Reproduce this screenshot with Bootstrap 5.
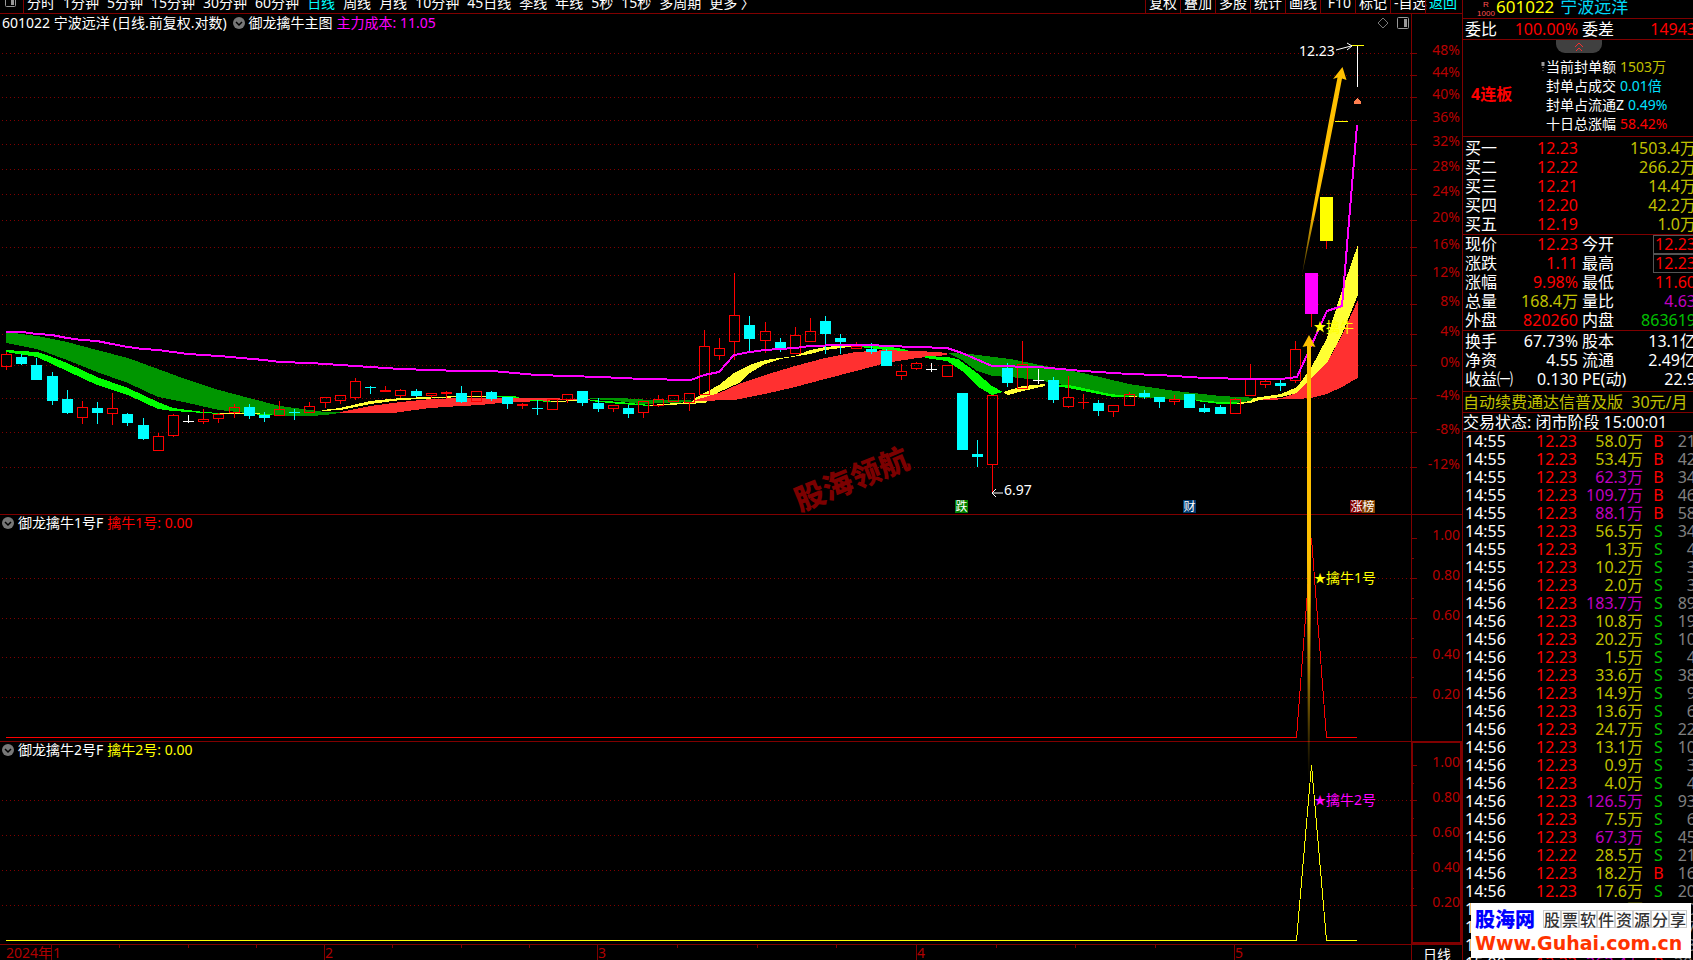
<!DOCTYPE html>
<html lang="zh-CN">
<head>
<meta charset="utf-8">
<meta name="viewport" content="width=device-width, initial-scale=1">
<title>601022 宁波远洋</title>
<link rel="stylesheet" href="https://cdn.jsdelivr.net/npm/bootstrap@5.3.0/dist/css/bootstrap.min.css">
<script src="https://cdn.jsdelivr.net/npm/bootstrap@5.3.0/dist/js/bootstrap.bundle.min.js"></script>
<style>
:root{--line:#800000;--axis:#b00000;--olive:#c0c000;--up:#f00;--down:#00c000;--pur:#c000c0}
body{background:#000;color:#fff;font:14px/20px "Noto Sans","Noto Sans CJK SC",sans-serif}
svg{display:block}
svg text{font:14px "Noto Sans","Noto Sans CJK SC",sans-serif}
svg .star{font-size:12px}
.chart-svg{shape-rendering:crispEdges}
.c-red{color:var(--up)}.c-olive{color:var(--olive)}.c-cyan{color:#00e0ff}.c-green{color:var(--down)}
.c-pur{color:var(--pur)}.c-mag{color:#f0f}.c-yellow{color:#ff0}.c-gray{color:gray}
/* period bar */
.period-bar{height:14px;border-bottom:1px solid var(--line)}
.period-bar a{color:inherit;text-decoration:none;white-space:nowrap}
.period-bar a.current{color:#0ff}
.periods{gap:8px}
.tool-links a{width:35px;padding-left:3px;border-left:1px solid var(--line)}
.tool-links a:last-child{width:37px}
.dock{width:24px;height:20px;margin-right:-5px;border-right:1px solid var(--line)}
/* chart panes */
.pane-title{top:0;left:0;right:0;height:18px;padding-left:2px}
.range-note{margin:0 6px 0 3px}
.fold{border:0;padding:0;background:none;line-height:0}
.icon-btn{border:0;padding:0;background:none;line-height:0}
.pane-tools{margin-right:53px}
.overlay-svg{top:0;left:0;pointer-events:none}
/* quote panel */
.quote{width:231px;border-left:1px solid var(--line);font-size:16px;line-height:19px}
.block{border-bottom:1px solid var(--line)}
.quote table{width:calc(100% + 3px);table-layout:fixed;border-collapse:collapse}
.quote th,.quote td{padding:0;font-weight:400;white-space:nowrap;overflow:visible;text-align:right}
.quote .first{padding-left:2px;text-align:left}
.quote .q-label{padding-left:4px;text-align:left}
.quote .trades{line-height:18px}
.stock-head{height:19px;font-size:17px;line-height:13px}
.margin-tag{width:18px;margin:0 1px 0 14px;font-size:8px;line-height:9px;color:#ff5050;font-family:"Liberation Sans",sans-serif}
.stock-name{margin-left:6px;color:#00d8f8}
.fold-tab{width:46px;height:13px;left:93px;top:0;border:0;padding:0;background:#404040;border-radius:0 0 9px 9px}
.order-ratio{padding-top:1px}
.bids{padding-top:2px}
.funds{padding:1px 0 2px}
.seal{height:97px;padding-top:13px;font-size:14px}
.streak{width:76px}
.pad-row{padding-left:7px}
.notice{line-height:20px}
.status{line-height:18px}
.boxed{outline:1px solid #555;outline-offset:-1px;padding-left:2px}
.site-mark{left:8px;right:2px;bottom:2px;height:55px;background:#fff;color:#333}
.site-mark b{font:900 20px/32px "Noto Sans CJK SC",sans-serif;color:#00f}
.site-mark .tiles i{font:normal 500 16px/18px "Noto Sans CJK SC",sans-serif;width:18px;height:18px;text-align:center;box-shadow:inset 0 0 0 1px #ccc}
.site-mark strong{font:700 19px/16px "DejaVu Sans",sans-serif;color:#f30}
</style>
</head>
<body class="overflow-hidden">
<div class="d-flex vh-100 overflow-hidden">
<main class="flex-grow-1 d-flex flex-column overflow-hidden">
  <nav class="period-bar d-flex justify-content-between align-items-end overflow-hidden flex-shrink-0" aria-label="周期">
    <div class="periods d-flex align-items-end">
      <span class="dock"><svg width="24" height="20"><rect x="5.500" y="1.500" width="10" height="12" rx="1" fill="none" stroke="#999"/><rect x="11" y="4" width="3" height="8" fill="#999"/></svg></span>
      <a href="#">分时</a><a href="#">1分钟</a><a href="#">5分钟</a><a href="#">15分钟</a><a href="#">30分钟</a><a href="#">60分钟</a><a href="#" class="current">日线</a><a href="#">周线</a><a href="#">月线</a><a href="#">10分钟</a><a href="#">45日线</a><a href="#">季线</a><a href="#">年线</a><a href="#">5秒</a><a href="#">15秒</a><a href="#">多周期</a><a href="#">更多 〉</a>
    </div>
    <div class="tool-links d-flex">
      <a href="#">复权</a><a href="#">叠加</a><a href="#">多股</a><a href="#">统计</a><a href="#">画线</a><a href="#">&nbsp;F10</a><a href="#">标记</a><a href="#">-自选</a><a href="#" class="current">返回</a>
    </div>
  </nav>

  <div class="position-relative">
    <section class="position-relative">
      <svg id="main" class="chart-svg w-100" viewBox="0 14 1462 500">
        <g id="grid1" stroke="#800000"></g>
        <g id="bands"></g>
        <text x="800" y="512" transform="rotate(-22 800 512)" style="font:900 30px 'Noto Sans CJK SC',sans-serif" fill="#7c0000">股海领航</text>
        <g id="candles"></g>
        <polyline fill="none" stroke="#f0f" stroke-width="2" points="6,332 22,332 37,334 52,335 67,338 82,340 97,341 112,344 128,347 143,349 158,350 173,352 188,354 219,356 264,360 280,362 310,363 340,365 370,367 401,369 431,370 461,371 492,371 537,375 600,377 643,379 691,380 704,375 719,372 734,355 750,352 765,350 795,348 810,346 841,345 871,345 887,346 917,347 947,348 962,353 992,366 1038,367 1083,371 1129,374 1159,375 1205,378 1250,379 1281,379 1297,377 1327,311 1342,306 1357,125"/>
        <text x="1299" y="56" fill="#fff">12.23</text>
        <path d="M1336 50L1351 46M1347 43L1352 46L1347 50" stroke="#fff" fill="none" shape-rendering="auto"/>
        <path d="M1354 104V101L1357 98L1361 101V104Z" fill="#ff7f50"/>
        <text x="1004" y="495" fill="#fff">6.97</text>
        <path d="M992 493H1003M996 489L992 493L996 497" stroke="#fff" fill="none" shape-rendering="auto"/>
        <path d="M1320 321l1.500 4h4.500l-3.500 3 1.500 4.500-4-2.800-4 2.800 1.500-4.500-3.500-3h4.500z" fill="#ff0" shape-rendering="auto"/>
        <text x="1326" y="332" fill="#ff0">擒牛</text>
        <g id="tags"></g>
      </svg>
      <div class="pane-title position-absolute d-flex align-items-center">
        <span>601022 宁波远洋</span><span class="range-note">(日线.前复权.对数)</span>
        <button class="fold me-1" aria-label="展开"><svg width="12" height="12"><circle cx="6" cy="6" r="6" fill="#777"/><path d="M3 5l3 3 3-3" stroke="#000" stroke-width="1.500" fill="none"/></svg></button>
        <span class="me-1">御龙擒牛主图</span><span class="c-mag">主力成本: 11.05</span>
        <span class="pane-tools ms-auto d-flex gap-2">
          <button class="icon-btn" aria-label="标记"><svg width="12" height="12"><path d="M6 1l5 5-5 5-5-5z" fill="none" stroke="#777"/></svg></button>
          <button class="icon-btn" aria-label="侧栏"><svg width="12" height="12"><rect x=".5" y=".5" width="11" height="11" rx="1" fill="none" stroke="#999"/><path d="M7 2h3v8h-3z" fill="#999"/></svg></button>
        </span>
      </div>
    </section>

    <section class="position-relative">
      <svg class="chart-svg w-100" viewBox="0 514 1462 227">
        <path d="M0 514.500H1462" stroke="#800000"/>
        <g id="grid2" stroke="#800000"></g>
        <path d="M6 737.500H1296.500L1311.500 538L1326.500 737.500H1357" stroke="#f00" fill="none"/>
        <text x="1314" y="583" fill="#ff0"><tspan class="star">★</tspan>擒牛1号</text>
      </svg>
      <div class="pane-title position-absolute d-flex align-items-center">
        <button class="fold me-1" aria-label="展开"><svg width="12" height="12"><circle cx="6" cy="6" r="6" fill="#777"/><path d="M3 5l3 3 3-3" stroke="#000" stroke-width="1.500" fill="none"/></svg></button>
        <span class="me-1">御龙擒牛1号F</span><span class="c-red">擒牛1号: 0.00</span>
      </div>
    </section>

    <section class="position-relative">
      <svg class="chart-svg w-100" viewBox="0 741 1462 203">
        <path d="M0 741.500H1462" stroke="#800000"/>
        <g id="grid3" stroke="#800000"></g>
        <path d="M1412 742V943H1461V742Z" fill="none" stroke="#800000" stroke-width="2"/>
        <path d="M6 940.500H1296.500L1311.500 765L1326.500 940.500H1357" stroke="#ff0" fill="none"/>
        <text x="1314" y="805" fill="#f0f"><tspan class="star">★</tspan>擒牛2号</text>
      </svg>
      <div class="pane-title position-absolute d-flex align-items-center">
        <button class="fold me-1" aria-label="展开"><svg width="12" height="12"><circle cx="6" cy="6" r="6" fill="#777"/><path d="M3 5l3 3 3-3" stroke="#000" stroke-width="1.500" fill="none"/></svg></button>
        <span class="me-1">御龙擒牛2号F</span><span class="c-yellow">擒牛2号: 0.00</span>
      </div>
    </section>

    <svg class="chart-svg w-100" viewBox="0 944 1462 16">
      <path id="dateTicks" stroke="#800000" fill="none"/>
      <g fill="#b00000"><text x="6" y="958">2024年</text><text x="53" y="958">1</text><text x="325" y="958">2</text><text x="598" y="958">3</text><text x="917" y="958">4</text><text x="1235" y="958">5</text></g>
      <text x="1423" y="960" fill="#fff">日线</text>
    </svg>

    <!-- hand-drawn arrows across the panes -->
    <svg class="overlay-svg position-absolute w-100" viewBox="0 14 1462 946">
      <defs>
        <linearGradient id="fadeA" x1="0" y1="1" x2="0" y2="0"><stop offset="0" stop-color="#ffc000" stop-opacity=".2"/><stop offset=".3" stop-color="#ffc000"/></linearGradient>
        <linearGradient id="fadeB" x1="0" y1="1" x2="0" y2="0"><stop offset="0" stop-color="#ffc000" stop-opacity="0"/><stop offset=".4" stop-color="#ffc000"/></linearGradient>
      </defs>
      <path d="M1342.500 67L1346.500 80L1342 78.500Q1324 175 1302 275Q1318 175 1337.500 77.500L1333 79Z" fill="url(#fadeA)"/>
      <path d="M1309 335L1315.500 347L1311 346V560L1309.500 778H1308L1307 560V346L1302.500 347Z" fill="url(#fadeB)"/>
    </svg>
  </div>
</main>

<aside class="quote position-relative flex-shrink-0 overflow-hidden">
  <header class="stock-head block d-flex overflow-hidden">
    <div class="margin-tag text-center">R<br>1000</div>
    <span class="c-yellow">601022</span><span class="stock-name">宁波远洋</span>
  </header>
  <div class="block order-ratio"><table><colgroup><col style="width:36px"><col style="width:79px"><col style="width:46px"><col></colgroup>
    <tr><th scope="row" class="first">委比</th><td class="c-red">100.00%</td><th scope="row" class="q-label">委差</th><td class="c-red">14943</td></tr></table></div>
  <div class="seal block position-relative d-flex">
    <button class="fold-tab position-absolute" aria-label="收起"><svg class="mx-auto" width="10" height="10"><path d="M1 5l4-4 4 4M2 9l3-3 3 3" stroke="#f03030" fill="none"/></svg></button>
    <strong class="streak c-red fs-6 align-self-center ps-2">4连板</strong>
    <div class="pt-1">
      <div class="d-flex"><svg width="7" height="19"><path d="M4 5v4M4 10v1M4 13v1" stroke="#999"/><rect x="2.500" y="5" width="3" height="4" fill="#999"/></svg><span class="me-1">当前封单额</span><span class="c-olive">1503万</span></div>
      <div class="d-flex pad-row"><span class="me-1">封单占成交</span><span class="c-cyan">0.01倍</span></div>
      <div class="d-flex pad-row"><span class="me-1">封单占流通Z</span><span class="c-cyan">0.49%</span></div>
      <div class="d-flex pad-row"><span class="me-1">十日总涨幅</span><span class="c-red">58.42%</span></div>
    </div>
  </div>
  <div class="block bids"><table id="bids"><colgroup><col style="width:36px"><col style="width:79px"><col></colgroup></table></div>
  <div class="block"><table id="stats"><colgroup><col style="width:36px"><col style="width:79px"><col style="width:46px"><col></colgroup></table></div>
  <div class="block funds"><table id="funds"><colgroup><col style="width:50px"><col style="width:65px"><col style="width:46px"><col></colgroup></table></div>
  <div class="block notice c-olive text-nowrap">自动续费通达信普及版&nbsp; 30元/月</div>
  <div class="block status text-nowrap">交易状态: 闭市阶段 15:00:01</div>
  <table id="trades" class="trades"><colgroup><col style="width:50px"><col style="width:64px"><col style="width:66px"><col style="width:31px"><col></colgroup></table>
  <a href="#" class="site-mark position-absolute d-block px-1 text-decoration-none overflow-hidden">
    <span class="d-flex align-items-center justify-content-between"><b>股海网</b><span class="tiles d-flex"><i>股</i><i>票</i><i>软</i><i>件</i><i>资</i><i>源</i><i>分</i><i>享</i></span></span>
    <strong class="d-block text-nowrap">Www.Guhai.com.cn</strong>
  </a>
</aside>
</div>

<script>
const $ = id => document.getElementById(id);
const AXIS_X = 1411;

/* scales: [y, label] */
function grid(id, rows, top, bottom, minor) {
  let s = `<path d="M${AXIS_X}.500 ${top}V${bottom}"/>`;
  rows.forEach(([y, t, noLine]) => {
    if (!noLine) s += `<path d="M2 ${y}.500H${AXIS_X}" stroke-dasharray="1 3"/>`;
    s += `<path d="M${AXIS_X} ${y}.500h6"/><text x="1460" y="${y + 2}" text-anchor="end" fill="#b80000" stroke="none">${t}</text>`;
  });
  (minor || []).forEach(y => s += `<path d="M${AXIS_X} ${y}.500h3"/>`);
  $(id).innerHTML = s;
}
const ys = [53,75,97,120,144,169,194,220,247,275,304,334,365,398,432,467];
grid('grid1', ys.map((y, i) => [y, (48 - 4 * i) + '%']), 14, 514);
grid('grid2', [[538,'1.00',1],[578,'0.80'],[618,'0.60'],[657,'0.40'],[697,'0.20']], 514, 741, [558,598,638,677]);
grid('grid3', [[765,'1.00',1],[800,'0.80'],[835,'0.60'],[870,'0.40'],[905,'0.20']], 741, 944, [783,818,853,888]);

/* moving-average ribbons */
const bands = [
 ['#009600','6,332 37,336 67,342 97,350 128,358 158,369 188,380 219,390 249,398 280,406 310,410 325,412 340,412 340,413 325,415 310,416 290,416 264,415 219,410 188,403 158,397 143,390 128,383 97,372 82,366 67,360 37,349 6,343'],
 ['#0f0','6,350 37,352 52,357 67,363 97,377 128,388 158,402 173,408 188,410 204,412 220,413 220,414 188,412 173,411 158,409 128,395 97,385 82,378 52,364 37,357 6,352'],
 ['#ff3','220,413 260,413 260,414 220,414'],['#0f0','257,414 272,414 272,415 257,415'],
 ['#ff3','322,410 340,408 370,401 401,398 431,397 461,396 497,396 497,397 461,397 401,400 370,404 350,408 340,410 322,411'],
 ['#ff3030','340,412 370,406 401,402 431,399 461,398 510,398 545,398 575,399 590,399 590,400 560,400 520,402 500,403 480,405 461,406 430,408 393,413 340,413'],
 ['#0f0','497,396 512,396 519,397 519,398 497,397'],['#0f0','530,400 555,401 555,402 530,401'],['#ff3','551,401 580,400 580,401 551,402'],
 ['#009600','590,398 620,398 650,400 690,400 695,402 640,404 610,400 590,399'],
 ['#0f0','590,400 620,402 650,405 650,406 635,405 620,404 590,401'],['#ff3','650,405 690,402 707,401 705,403 650,406'],
 ['#ff3','695,398 719,385 734,373 750,365 765,360 795,356 810,350 825,347 850,345 856,346 841,348 825,350 810,354 780,359 765,364 750,373 739,383 719,392 704,402 690,403'],
 ['#ff3030','695,400 719,393 739,384 765,375 795,366 825,358 856,352 886,350 917,351 937,352 947,353 947,355 917,358 886,363 856,371 825,379 795,387 765,394 735,400 695,401'],
 ['#0f0','860,345 886,346 908,350 908,351 886,350 860,347'],
 ['#0f0','925,356 947,357 958,359 977,373 992,386 1003,392 992,395 977,386 962,371 947,361 925,358'],
 ['#009600','947,353 970,354 1010,359 1040,365 1083,373 1129,384 1175,391 1220,396 1258,398 1250,401 1235,403 1205,401 1190,400 1129,397 1110,395 1083,389 1053,383 1038,380 1010,377 992,376 977,371 962,360 950,354'],
 ['#ff3','1003,392 1023,386 1045,384 1045,386 1023,391 1008,395'],
 ['#0f0','1045,384 1068,385 1083,388 1110,394 1129,396 1129,397 1114,397 1083,391 1068,388'],
 ['#ff3','1129,396 1137,396 1137,397 1129,397'],['#0f0','1196,400 1220,402 1237,402 1237,404 1220,404 1196,401'],
 ['#ff3030','1254,399 1281,398 1297,393 1311,378 1327,363 1342,335 1357.500,301 1357.500,378 1342,387 1327,394 1311,398 1297,399 1260,400'],
 ['#ff3','1237,403 1250,401 1254,398 1281,394 1297,387 1311,368 1327,338 1342,290 1357.500,246 1357.500,296 1342,334 1327,363 1311,378 1297,393 1281,397 1260,400 1250,403 1237,404']
];
$('bands').innerHTML = bands.map(([c, p]) => `<polygon fill="${c}" points="${p}"/>`).join('');

/* candles: kind, body top, body bottom, wick top, wick bottom. r rising, c falling, x/w crosses, f flat */
const K = `r354,366,352,370 c357,364,354,365 c365,380,358,380 c376,401,372,405 c399,413,390,414 r407,417,401,424 c408,413,402,424 r408,413,393,425 c414,423,413,426 c425,439,418,440 r436,450,433,450 r415,435,414,437 w421,421,415,423 r419,421,409,424 r414,418,413,423 r407,412,404,418 c407,416,404,419 c415,418,412,422 r409,415,401,415 x412,412,409,420 r406,412,402,412 r397,402,397,408 r395,400,395,404 r381,397,378,400 x387,387,386,394 f390,392,386,392 r390,395,389,398 c391,396,389,397 r393,395,393,398 f392,394,391,398 c393,402,386,403
r391,401,391,401 c392,399,391,401 c397,404,397,409 f404,406,403,409 x408,408,400,415 r399,409,399,409 r394,399,394,403 c391,403,391,406 c403,409,398,412 r405,408,405,412 c408,414,405,418 r401,412,401,418 r399,405,395,407 r395,401,395,401 r393,402,393,411 r346,394,330,394 r348,355,338,360 r315,341,273,360 c325,339,316,351 r331,340,322,353 c342,349,338,352 r335,353,327,353 r331,341,318,341 c321,334,316,354 c338,342,334,354 r346,348,342,348 c349,352,343,354 c351,366,349,366 r371,375,364,380 r363,368,362,370 w369,369,363,372
r365,376,365,376 c393,450,393,450 c454,457,440,467 r395,464,395,493 c368,383,363,387 r364,388,341,388 w380,380,369,384 c380,400,377,403 r397,406,376,408 f402,403,394,409 c403,411,400,416 r405,411,405,417 r394,405,392,405 c393,397,390,399 c397,402,397,408 r399,401,395,405 c394,408,394,408 c408,412,404,413 c407,414,405,414 r399,413,398,413 r379,395,364,395 r381,384,380,388 c383,386,380,391 r349,380,341,383`.split(/\s+/);
let s = '';
K.forEach((k, i) => {
  const [a, b, t, u] = k.slice(1).split(',').map(Number), x = 6 + Math.round(15.17 * i), kind = k[0];
  const col = {r:'#f00', f:'#f00', c:'#0ff', x:'#0ff', w:'#fff'}[kind];
  if (kind === 'r') {
    s += `<rect x="${x - 4.5}" y="${a + .5}" width="10" height="${Math.max(b - a, 2)}" fill="none" stroke="${col}"/>`;
    if (t < a) s += `<rect x="${x}" y="${t}" width="1" height="${a - t}" fill="${col}"/>`;
    if (u > b + 1) s += `<rect x="${x}" y="${b + 1}" width="1" height="${u - b - 1}" fill="${col}"/>`;
  } else {
    s += `<rect x="${x - 5}" y="${a}" width="11" height="${Math.max(b - a, 1)}" fill="${col}"/><rect x="${x}" y="${t}" width="1" height="${u - t}" fill="${col}"/>`;
  }
});
s += '<path d="M1305 273h13v41h-13z" fill="#f0f"/><path d="M1311 314h1v13h-1zM1326 241h1v8h-1z" fill="#f00"/><path d="M1320 197h13v44h-13zM1335 121h13v1h-13zM1351 45h13v1h-13z" fill="#ff0"/><path d="M1357 46h1v41h-1z" fill="#fff"/>';
$('candles').innerHTML = s;

$('tags').innerHTML = [[955,'#008000','跌'],[1183,'#003a70','财'],[1350,'#800000','涨'],[1362,'#804000','榜']]
  .map(([x, c, t]) => `<rect x="${x}" y="500" width="13" height="13" fill="${c}"/><text x="${x + .5}" y="511" fill="#fff" style="font-size:12px">${t}</text>`).join('');

$('dateTicks').setAttribute('d', 'M0 944.500H1462M1411.500 944V960' + [51,324,597,916,1234].map(x => `M${x}.500 944v16`).join('')
  + [119,188,256,392,461,529,677,757,836,996,1075,1155].map(x => `M${x}.500 944v4`).join(''));

/* quote tables */
const row = c => `<tr>${c}</tr>`;
const lab = t => `<th scope="row" class="first">${t}</th>`;
$('bids').insertAdjacentHTML('beforeend', [['一','12.23','1503.4'],['二','12.22','266.2'],['三','12.21','14.4'],['四','12.20','42.2'],['五','12.19','1.0']]
  .map(([n, p, v]) => row(`${lab('买' + n)}<td class="c-red">${p}</td><td class="c-olive">${v}万</td>`)).join(''));
const quad = (id, rows) => $(id).insertAdjacentHTML('beforeend', rows.map(([a, b, c, d, e, f, g]) =>
  row(`${lab(a)}<td class="${c}">${b}</td><th scope="row" class="q-label">${d}</th><td class="${f}">${g ? `<span class="boxed d-block ms-auto" style="width:max-content">${e}</span>` : e}</td>`)).join(''));
quad('stats', [['现价','12.23','c-red','今开','12.23','c-red',1],['涨跌','1.11','c-red','最高','12.23','c-red',1],['涨幅','9.98%','c-red','最低','11.60','c-red'],['总量','168.4万','c-olive','量比','4.63','c-pur'],['外盘','820260','c-red','内盘','863619','c-green']]);
quad('funds', [['换手','67.73%','','股本','13.1亿',''],['净资','4.55','','流通','2.49亿',''],['收益㈠','0.130','','PE(动)','22.9','']]);
const T = '58.0B21 53.4B42 62.3B34 109.7B46 88.1B58 56.5S34 1.3S4 10.2S3 2.0S3 183.7S89 10.8S19 20.2S10 1.5S4 33.6S38 14.9S9 13.6S6 24.7S22 13.1S10 0.9S3 4.0S4 126.5S93 7.5S6 67.3S45 28.5S21 18.2B16 17.6S20 12.4S10 9.6S7 15.8S13 263.4B204'.split(' ');
$('trades').insertAdjacentHTML('beforeend', T.map((t, i) => {
  const [, v, d, n] = t.match(/([\d.]+)([BS])(\d+)/);
  return row(`<td class="first">${i < 8 ? '14:55' : i < 29 ? '14:56' : '15:00'}</td><td class="c-red">${i === 23 ? '12.22' : '12.23'}</td><td class="${v > 60 ? 'c-pur' : 'c-olive'}">${v}万</td><td class="text-center ${d === 'B' ? 'c-red' : 'c-green'}">${d}</td><td class="c-gray">${n}</td>`);
}).join(''));
</script>
</body>
</html>
